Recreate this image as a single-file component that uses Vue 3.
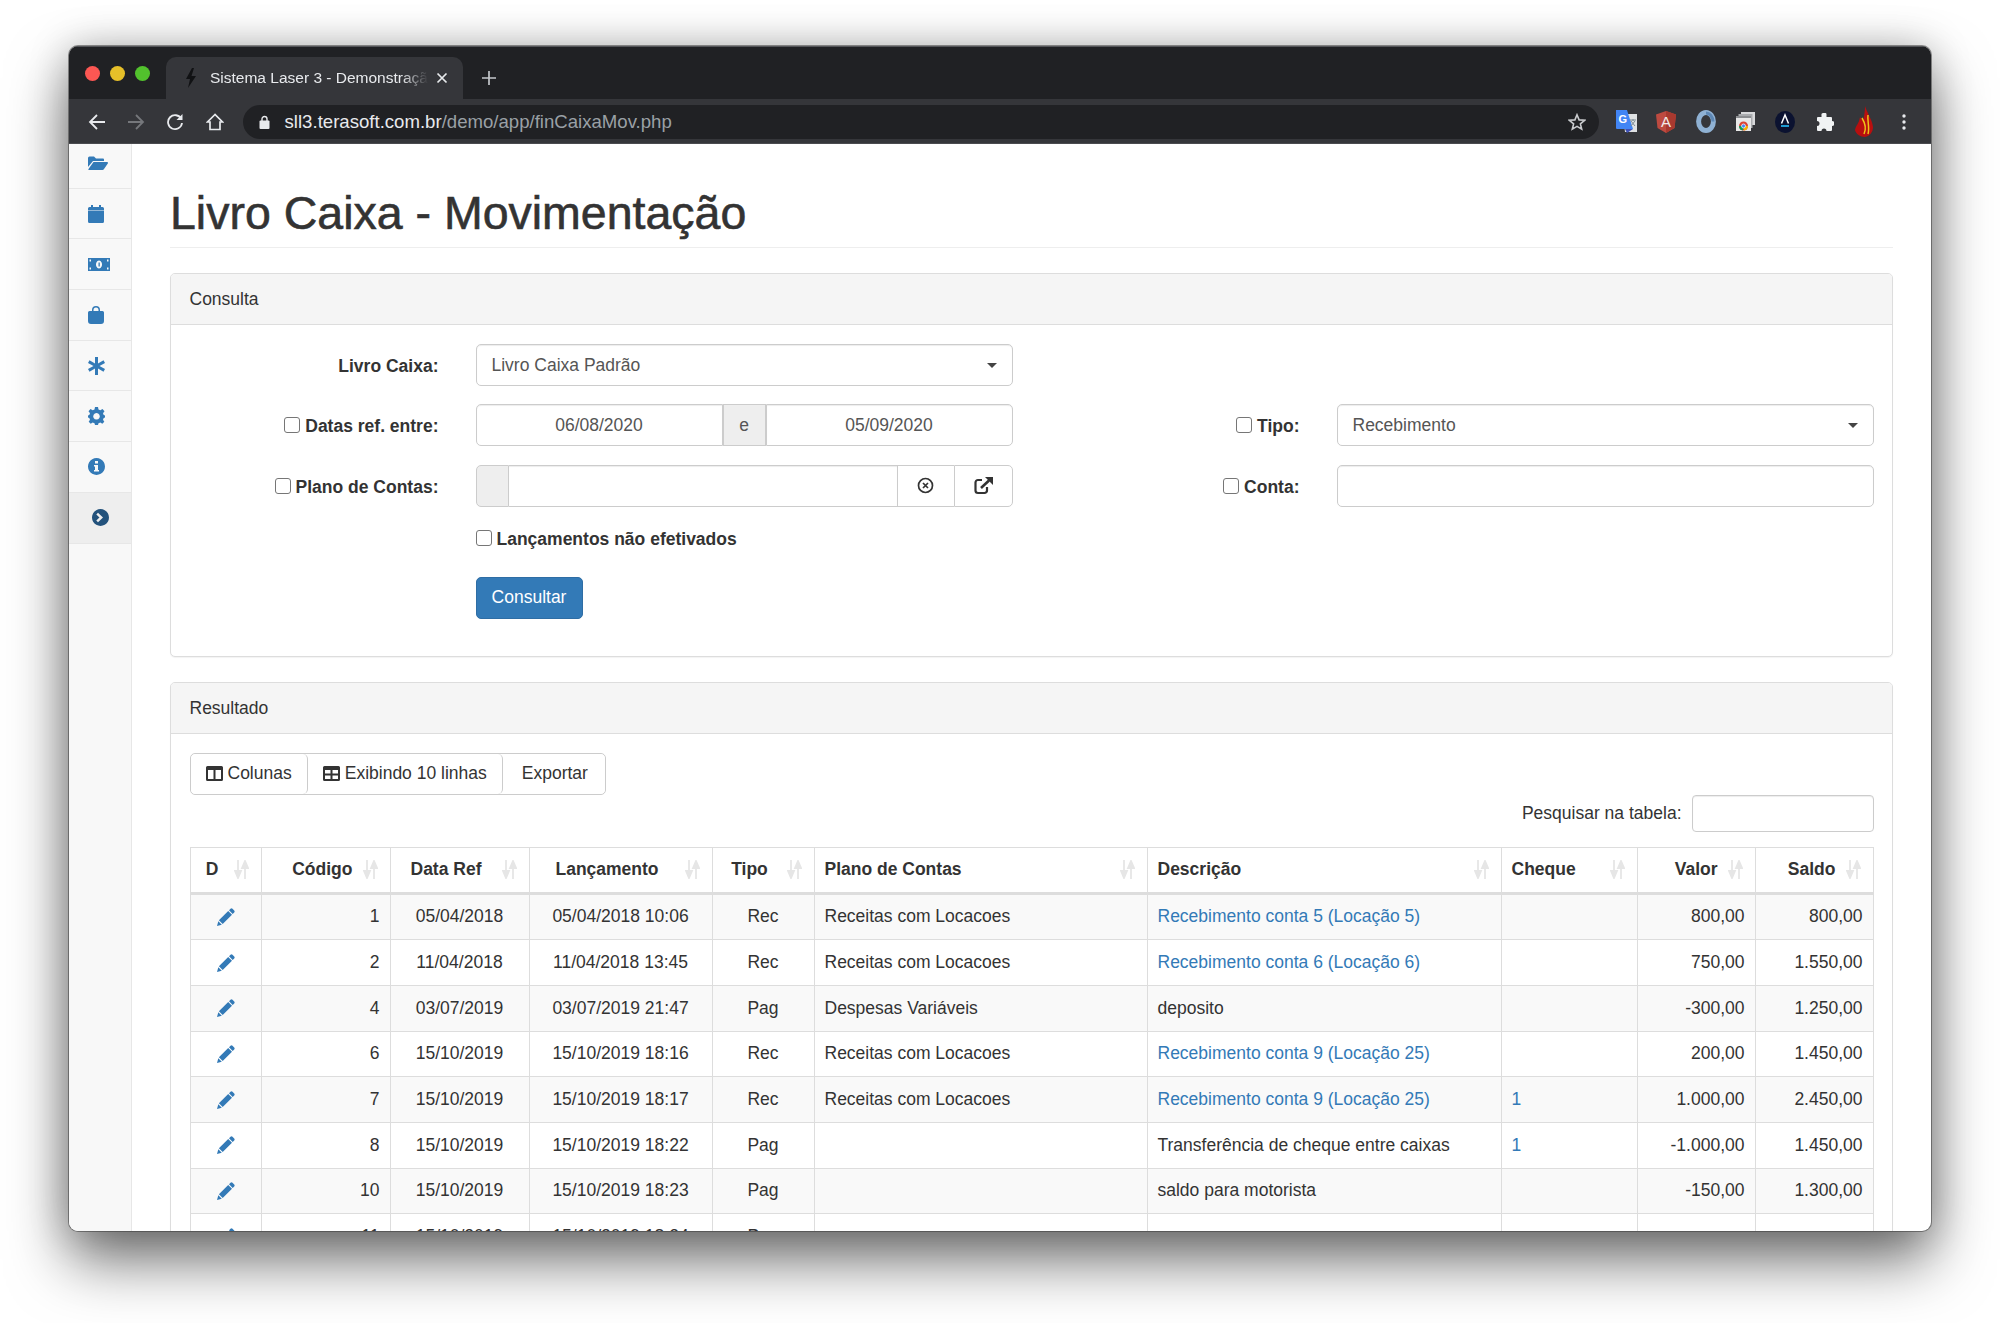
<template>
  <div class="desktop">
    <div class="window">
      <div class="titlebar">
        <div class="lights">
          <span class="light red"></span>
          <span class="light yellow"></span>
          <span class="light green"></span>
        </div>
        <div class="tab">
          <svg class="favicon" width="12" height="20" viewBox="0 0 12 20"><path d="M7 0 L1 11 h4 L3 20 L11 8 H6.5 L9 0z" fill="#111214" /></svg>
          <span class="tab-title">Sistema Laser 3 - Demonstração</span>
          <svg class="tab-close" width="12" height="12" viewBox="0 0 12 12"><path d="M1.5 1.5 L10.5 10.5 M10.5 1.5 L1.5 10.5" stroke="#e8eaed" stroke-width="1.7" /></svg>
        </div>
        <svg class="new-tab" width="16" height="16" viewBox="0 0 16 16"><path d="M8 1 V15 M1 8 H15" stroke="#c4c7cb" stroke-width="1.7" /></svg>
      </div>

      <div class="toolbar">
        <span class="tool"><svg width="18" height="18" viewBox="0 0 18 18"><path d="M17 9 H2 M9 2 L2 9 L9 16" fill="none" stroke="#e8eaed" stroke-width="1.8" /></svg></span>
        <span class="tool"><svg width="18" height="18" viewBox="0 0 18 18"><path d="M1 9 H16 M9 2 L16 9 L9 16" fill="none" stroke="#75777b" stroke-width="1.8" /></svg></span>
        <span class="tool"><svg width="18" height="18" viewBox="0 0 18 18"><path d="M15.3 6 A7 7 0 1 0 16 10" fill="none" stroke="#e8eaed" stroke-width="1.8" /><path d="M16.5 1 V7 H10.5z" fill="#e8eaed" /></svg></span>
        <span class="tool"><svg width="18" height="18" viewBox="0 0 18 18"><path d="M9 1.5 L1.5 9 H4 V16.5 H14 V9 H16.5z" fill="none" stroke="#e8eaed" stroke-width="1.7" /></svg></span>
        <div class="omnibox">
          <svg class="lock" width="11" height="14" viewBox="0 0 11 14"><path d="M3 6 V4 a2.5 2.5 0 0 1 5 0 V6" fill="none" stroke="#e8eaed" stroke-width="1.4" /><rect x="0.5" y="5.5" width="10" height="8.5" rx="1" fill="#e8eaed" /></svg>
          <span class="url"><span class="host">sll3.terasoft.com.br</span>/demo/app/finCaixaMov.php</span>
          <svg class="star" width="18" height="18" viewBox="0 0 18 18"><path d="M9 1.8 L11.1 6.9 L16.6 7.3 L12.4 10.9 L13.7 16.2 L9 13.4 L4.3 16.2 L5.6 10.9 L1.4 7.3 L6.9 6.9z" fill="none" stroke="#c8cacd" stroke-width="1.6" /></svg>
        </div>
        <div class="extensions">
          <span class="tool"><svg width="21" height="23" viewBox="0 0 21 23"><path d="M7 4 H21 V22 H9z" fill="#dfe1e3" /><path d="M0 0 H11 L17 19 H1 a1 1 0 0 1 -1 -1z" fill="#4285f4" /><path d="M9 19 H17 L11 23z" fill="#3f51b5" /><text x="2.5" y="13" font-size="11" font-weight="700" font-family="Liberation Sans, sans-serif" fill="#fff">G</text><path d="M14 10 H20 M17 9 V11 M15 16 L19 11 M15 11 L19 16" stroke="#7d8b94" stroke-width="1" fill="none" /></svg></span>
          <span class="tool"><svg width="20" height="22" viewBox="0 0 20 22"><path d="M10 0 L20 3.5 L18.5 17 L10 22 L1.5 17 L0 3.5z" fill="#bd4a40" /><path d="M10 0 L20 3.5 L18.5 17 L10 22z" fill="#a8392f" /><text x="10" y="16" text-anchor="middle" font-size="15" font-family="Liberation Sans, sans-serif" fill="#f3e9e7">A</text></svg></span>
          <span class="tool"><svg width="20" height="23" viewBox="0 0 20 23"><ellipse cx="10" cy="11.500" rx="7.400" ry="9" fill="none" stroke="#8fb1d3" stroke-width="5" /><path d="M10 3 a7 9 0 0 1 7 8.500" fill="none" stroke="#5d87b4" stroke-width="3" /></svg></span>
          <span class="tool"><svg width="19" height="19" viewBox="0 0 19 19"><rect x="5" y="0" width="14" height="13" fill="#d8d9db" /><rect x="2.500" y="2" width="14" height="14" fill="#a9abae" /><rect x="0" y="4" width="15" height="15" fill="#e8e8e8" /><rect x="0" y="4" width="15" height="2" fill="#8b8d90" /><circle cx="7.500" cy="14" r="4.500" fill="#db4437" /><path d="M7.500 14 L3 14 A4.500 4.500 0 0 0 7 18.500z" fill="#0f9d58" /><path d="M7.500 14 L12 14 A4.500 4.500 0 0 1 8 18.500z" fill="#f4b400" /><circle cx="7.500" cy="14" r="2" fill="#4285f4" stroke="#fff" stroke-width=".7" /></svg></span>
          <span class="tool"><svg width="20" height="22" viewBox="0 0 20 22"><ellipse cx="10" cy="11" rx="10" ry="11" fill="#0b1230" /><path d="M6.500 12.500 L10 4 L13.500 12.500" fill="none" stroke="#fff" stroke-width="1.500" /><rect x="6" y="14" width="8" height="2" fill="#1f9bd1" /></svg></span>
          <span class="tool"><svg width="18" height="18" viewBox="0 0 18 18"><path d="M7 0 h2.500 a1.500 1.500 0 0 1 1 1 V4 H15 a1 1 0 0 1 1 1 V8 a2.500 2.500 0 1 1 0 5 V17 a1 1 0 0 1 -1 1 H10.500 a2.500 2.500 0 1 0 -5 0 H2 a1 1 0 0 1 -1 -1 V13 a2.500 2.500 0 1 0 0 -5 V5 a1 1 0 0 1 1 -1 H5.500 V2.500 A2 2 0 0 1 7 0z" fill="#f1f3f4" /></svg></span>
          <span class="tool"><svg width="19" height="31" viewBox="0 0 19 31"><path d="M10 0 C12 7 17 13 18 21 C18 26 15 30 10 31 C5 31 1 28 0 24 C1 19 4 18 5 11 C7 14 8 14 8 16 C9 10 10 6 10 0z" fill="#b80f0f" /><path d="M7 12 C10 17 12 22 9 28 M13 9 C12 15 15 21 13 28" fill="none" stroke="#f0c419" stroke-width="1.500" /></svg></span>
          <span class="tool"><svg width="6" height="18" viewBox="0 0 6 18"><circle cx="3" cy="3" r="1.700" fill="#e8eaed" /><circle cx="3" cy="9" r="1.700" fill="#e8eaed" /><circle cx="3" cy="15" r="1.700" fill="#e8eaed" /></svg></span>
        </div>
      </div>

      <div class="page">
        <aside class="sidebar">
          <div v-for="(item, i) in menu" :key="i" class="menu-item" :class="{ active: item.active }">
            <svg :width="item.w" :height="item.h" :viewBox="`0 0 ${item.w} ${item.h}`">
              <path :d="item.d" fill-rule="evenodd" />
            </svg>
          </div>
        </aside>

        <main class="content">
          <h1>Livro Caixa - Movimentação</h1>

          <section class="panel">
            <div class="panel-heading">Consulta</div>
            <div class="panel-body form-body">
              <div class="form-grid">
                <label class="field-label">Livro Caixa:</label>
                <div class="select">Livro Caixa Padrão<span class="caret"></span></div>
                <span></span>
                <span></span>

                <label class="field-label"><input type="checkbox" />Datas ref. entre:</label>
                <div class="input-group">
                  <div class="control date">06/08/2020</div>
                  <div class="addon e-addon">e</div>
                  <div class="control date">05/09/2020</div>
                </div>
                <label class="field-label"><input type="checkbox" />Tipo:</label>
                <div class="select">Recebimento<span class="caret"></span></div>

                <label class="field-label"><input type="checkbox" />Plano de Contas:</label>
                <div class="input-group">
                  <div class="addon blank-addon"></div>
                  <div class="control grow"></div>
                  <div class="addon-btn">
                    <svg width="17" height="17" viewBox="0 0 17 17"><circle cx="8.500" cy="8.500" r="7" fill="none" stroke="#333" stroke-width="1.700" /><path d="M6 6 L11 11 M11 6 L6 11" stroke="#333" stroke-width="1.700" /></svg>
                  </div>
                  <div class="addon-btn last">
                    <svg width="19" height="18" viewBox="0 0 19 18"><path d="M8 3 H4 A2.500 2.500 0 0 0 1.500 5.500 V13.500 A2.500 2.500 0 0 0 4 16 H10.500 A2.500 2.500 0 0 0 13 13.500 V10" fill="none" stroke="#333" stroke-width="2.200" /><path d="M11 0 H19 V8z" fill="#333" /><path d="M7 11 L15 3.500" stroke="#333" stroke-width="2.600" /></svg>
                  </div>
                </div>
                <label class="field-label"><input type="checkbox" />Conta:</label>
                <div class="control"></div>

                <span></span>
                <label class="check-line"><input type="checkbox" />Lançamentos não efetivados</label>
                <span></span>
                <span></span>

                <span></span>
                <div class="submit-cell"><button class="btn-primary">Consultar</button></div>
              </div>
            </div>
          </section>

          <section class="panel">
            <div class="panel-heading">Resultado</div>
            <div class="panel-body">
              <div class="btn-group">
                <button>
                  <svg width="17" height="15" viewBox="0 0 17 15"><path fill-rule="evenodd" d="M1.500 0 H15.500 A1.500 1.500 0 0 1 17 1.500 V13.500 A1.500 1.500 0 0 1 15.500 15 H1.500 A1.500 1.500 0 0 1 0 13.500 V1.500 A1.500 1.500 0 0 1 1.500 0z M2 4 V13 H7.500 V4z M9.500 4 V13 H15 V4z" fill="#333" /></svg>
                  Colunas
                </button>
                <button>
                  <svg width="17" height="15" viewBox="0 0 17 15"><path fill-rule="evenodd" d="M1.500 0 H15.500 A1.500 1.500 0 0 1 17 1.500 V13.500 A1.500 1.500 0 0 1 15.500 15 H1.500 A1.500 1.500 0 0 1 0 13.500 V1.500 A1.500 1.500 0 0 1 1.500 0z M2 4 V7.500 H7.500 V4z M9.500 4 V7.500 H15 V4z M2 9.500 V13 H7.500 V9.500z M9.500 9.500 V13 H15 V9.500z" fill="#333" /></svg>
                  Exibindo 10 linhas
                </button>
                <button class="export">Exportar</button>
              </div>

              <div class="search">
                <span>Pesquisar na tabela:</span>
                <div class="search-input"></div>
              </div>

              <table>
                <colgroup>
                  <col v-for="col in columns" :key="col.label" :style="{ width: col.width + 'px' }" />
                </colgroup>
                <thead>
                  <tr>
                    <th v-for="col in columns" :key="col.label" :class="col.align">
                      {{ col.label }}
                      <svg class="sort" width="15" height="19" viewBox="0 0 15 19"><path d="M4 0 V14 M1 11 L4 18 L7 11z M11 19 V5 M8 8 L11 1 L14 8z" fill="#e6e6e6" stroke="#e6e6e6" stroke-width="1.800" /></svg>
                    </th>
                  </tr>
                </thead>
                <tbody>
                  <tr v-for="row in rows" :key="row.code">
                    <td class="center">
                      <svg class="pencil" width="18" height="18" viewBox="0 0 18 18"><path d="M13.500 .8 a1.500 1.500 0 0 1 2 0 l1.700 1.700 a1.500 1.500 0 0 1 0 2 L15.700 6 L12 2.300z M11.200 3 L15 6.800 L5.700 16 L1.900 12.300z M1.300 13.200 L4.800 16.700 L0 18z" fill="#337ab7" /></svg>
                    </td>
                    <td class="right">{{ row.code }}</td>
                    <td class="center">{{ row.ref }}</td>
                    <td class="center">{{ row.launch }}</td>
                    <td class="center">{{ row.type }}</td>
                    <td>{{ row.plan }}</td>
                    <td><a v-if="row.link" href="#">{{ row.desc }}</a><template v-else>{{ row.desc }}</template></td>
                    <td><a v-if="row.cheque" href="#">{{ row.cheque }}</a></td>
                    <td class="right">{{ row.value }}</td>
                    <td class="right">{{ row.balance }}</td>
                  </tr>
                </tbody>
              </table>
            </div>
          </section>
        </main>
      </div>
    </div>
  </div>
</template>

<script setup>
const menu = [
  { w: 20, h: 14, d: 'M0 2 a1.500 1.500 0 0 1 1.500 -1.500 H6 L8 2.500 H15 a1 1 0 0 1 1 1 V5 H5 L0 11z M5.500 6 H19 a1 1 0 0 1 .8 1.500 L16 13 a2 2 0 0 1 -1.500 1 H1 a.7 .7 0 0 1 -.5 -1.100z' },
  { w: 16, h: 18, d: 'M3 0 H5 V2 H11 V0 H13 V2 H14.500 A1.500 1.500 0 0 1 16 3.500 V16.500 A1.500 1.500 0 0 1 14.500 18 H1.500 A1.500 1.500 0 0 1 0 16.500 V3.500 A1.500 1.500 0 0 1 1.500 2 H3z M0 5 V5.600 H16 V5z' },
  { w: 22, h: 13, d: 'M0 0 H22 V13 H0z M11 2.500 a3 4 0 1 0 .01 0z M10.500 4.500 V8.500 H11.800 V4.500z M1.500 1.500 V3.500 H3 V1.500z M19 1.500 V3.500 H20.500 V1.500z M1.500 9.500 V11.500 H3 V9.500z M19 9.500 V11.500 H20.500 V9.500z' },
  { w: 16, h: 18, d: 'M4 5 V4 a4 4 0 0 1 8 0 V5 H14.500 A1.500 1.500 0 0 1 16 6.500 V15 a3 3 0 0 1 -3 3 H3 a3 3 0 0 1 -3 -3 V6.500 A1.500 1.500 0 0 1 1.500 5z M5.500 5 H10.500 V4 a2.500 2.500 0 0 0 -5 0z' },
  { w: 17, h: 18, d: 'M7 0 H10 V6.500 L15.500 3.300 L17 6 L11.500 9 L17 12 L15.500 14.700 L10 11.500 V18 H7 V11.500 L1.500 14.700 L0 12 L5.500 9 L0 6 L1.500 3.300 L7 6.500z' },
  { w: 17, h: 18, d: 'M7 0 H10 L10.500 2.500 L12.300 3.300 L14.500 2 L16.500 4.200 L15 6.300 L15.700 8 L17 8.400 V10.600 L15.700 11 L15 12.800 L16.300 14.800 L14.300 16.800 L12.300 15.500 L10.500 16.200 L10 18 H7 L6.500 16.200 L4.700 15.500 L2.700 16.800 L.7 14.800 L2 12.800 L1.300 11 L0 10.600 V8.400 L1.300 8 L2 6.300 L.5 4.200 L2.500 2 L4.700 3.300 L6.500 2.500z M8.500 6 a3.300 3.300 0 1 0 .01 0z' },
  { w: 17, h: 17, d: 'M8.500 0 a8.500 8.500 0 1 1 -.01 0z M7 3 V5.500 H10 V3z M6 7 V8.500 H7 V12 H6 V13.500 H11 V12 H10 V7z' },
  { w: 17, h: 17, active: true, d: 'M8.500 0 a8.500 8.500 0 1 1 -.01 0z M6 3.700 L4.300 5.400 L7.500 8.500 L4.300 11.600 L6 13.300 L11 8.500z' },
]

const columns = [
  { label: 'D', width: 72, align: 'center' },
  { label: 'Código', width: 129, align: 'right' },
  { label: 'Data Ref', width: 139, align: 'center' },
  { label: 'Lançamento', width: 183, align: 'center' },
  { label: 'Tipo', width: 102, align: 'center' },
  { label: 'Plano de Contas', width: 333, align: 'left' },
  { label: 'Descrição', width: 354, align: 'left' },
  { label: 'Cheque', width: 136, align: 'left' },
  { label: 'Valor', width: 118, align: 'right' },
  { label: 'Saldo', width: 118, align: 'right' },
]

const rec = 'Receitas com Locacoes'
const rows = [
  { code: 1, ref: '05/04/2018', launch: '05/04/2018 10:06', type: 'Rec', plan: rec, desc: 'Recebimento conta 5 (Locação 5)', link: true, value: '800,00', balance: '800,00' },
  { code: 2, ref: '11/04/2018', launch: '11/04/2018 13:45', type: 'Rec', plan: rec, desc: 'Recebimento conta 6 (Locação 6)', link: true, value: '750,00', balance: '1.550,00' },
  { code: 4, ref: '03/07/2019', launch: '03/07/2019 21:47', type: 'Pag', plan: 'Despesas Variáveis', desc: 'deposito', value: '-300,00', balance: '1.250,00' },
  { code: 6, ref: '15/10/2019', launch: '15/10/2019 18:16', type: 'Rec', plan: rec, desc: 'Recebimento conta 9 (Locação 25)', link: true, value: '200,00', balance: '1.450,00' },
  { code: 7, ref: '15/10/2019', launch: '15/10/2019 18:17', type: 'Rec', plan: rec, desc: 'Recebimento conta 9 (Locação 25)', link: true, cheque: '1', value: '1.000,00', balance: '2.450,00' },
  { code: 8, ref: '15/10/2019', launch: '15/10/2019 18:22', type: 'Pag', plan: '', desc: 'Transferência de cheque entre caixas', cheque: '1', value: '-1.000,00', balance: '1.450,00' },
  { code: 10, ref: '15/10/2019', launch: '15/10/2019 18:23', type: 'Pag', plan: '', desc: 'saldo para motorista', value: '-150,00', balance: '1.300,00' },
  { code: 11, ref: '15/10/2019', launch: '15/10/2019 18:24', type: 'Pag', plan: '', desc: '', value: '', balance: '' },
]
</script>

<style>
html, body { background: #fff; }
</style>

<style scoped>
.desktop {
  height: 1323px;
  box-sizing: border-box;
  padding: 46px 69px 92px;
  overflow: hidden;
  background: #fff;
  font-family: "Liberation Sans", Arial, sans-serif;
  font-size: 17.5px;
  color: #333;
}

.window {
  height: 100%;
  border-radius: 9px;
  overflow: hidden;
  background: #fff;
  display: flex;
  flex-direction: column;
  box-shadow: 0 0 0 1px rgba(60, 60, 60, .55), 0 0 40px rgba(0, 0, 0, .22), 0 30px 60px rgba(0, 0, 0, .55);
}

.titlebar {
  height: 53px;
  flex: none;
  background: #202124;
  display: flex;
  align-items: flex-end;
  box-shadow: inset 0 1px 0 #55565a;
}

.lights {
  display: flex;
  gap: 10px;
  width: 97px;
  padding: 0 0 18px 16px;
  box-sizing: border-box;
}

.light {
  width: 15px;
  height: 15px;
  border-radius: 50%;
}

.red { background: #fc5753; }
.yellow { background: #e6bf29; }
.green { background: #52c22d; }

.tab {
  width: 297px;
  height: 42px;
  background: #35363a;
  border-radius: 10px 10px 0 0;
  display: flex;
  align-items: center;
  box-sizing: border-box;
  padding: 0 15px 0 19px;
}

.favicon { flex: none; margin-right: 13px; }

.tab-title {
  flex: 1;
  color: #e8eaed;
  font-size: 15.500px;
  white-space: nowrap;
  overflow: hidden;
  -webkit-mask-image: linear-gradient(90deg, #000 88%, transparent);
  mask-image: linear-gradient(90deg, #000 88%, transparent);
}

.tab-close { flex: none; margin-left: 8px; }

.new-tab { margin: 0 0 13px 18px; }

.toolbar {
  height: 45px;
  flex: none;
  background: #35363a;
  display: flex;
  align-items: center;
  padding-left: 8px;
  box-shadow: inset 0 -1px 0 #4a4b4f;
}

.tool {
  width: 39.400px;
  display: flex;
  justify-content: center;
  align-items: center;
}

.omnibox {
  width: 1356px;
  height: 34px;
  margin-left: 8px;
  background: #202124;
  border-radius: 17px;
  display: flex;
  align-items: center;
  padding: 0 13px 0 16px;
  box-sizing: border-box;
  color: #9aa0a6;
  font-size: 18.600px;
}

.url { flex: 1; margin-left: 15px; }
.host { color: #e8eaed; }
.extensions { display: flex; margin-left: 8px; }
.extensions .tool { width: 39.700px; }

.page {
  flex: 1;
  display: flex;
  min-height: 0;
  overflow: hidden;
}

.sidebar {
  width: 63px;
  flex: none;
  box-sizing: border-box;
  background: #f8f8f8;
  border-right: 1px solid #e7e7e7;
  overflow: hidden;
}

.menu-item {
  height: 50.700px;
  box-sizing: border-box;
  border-bottom: 1px solid #e7e7e7;
  display: flex;
  align-items: center;
  padding-left: 19px;
  fill: #337ab7;
}

.menu-item:first-child { margin-top: -6px; }

.menu-item.active {
  background: #eee;
  fill: #23527c;
  padding-left: 23px;
}

.content {
  flex: 1;
  min-width: 0;
  padding: 0 38px;
  overflow: hidden;
}

h1 {
  margin: 45px 0 25px;
  padding-bottom: 8px;
  border-bottom: 1px solid #eee;
  font-size: 46.500px;
  font-weight: 400;
  line-height: 49.500px;
  -webkit-text-stroke: .6px #333;
}

.panel {
  border: 1px solid #ddd;
  border-radius: 5px;
  margin-bottom: 25px;
  background: #fff;
  box-shadow: 0 1px 1px rgba(0, 0, 0, .05);
}

.panel-heading {
  height: 51px;
  box-sizing: border-box;
  padding: 0 18.500px;
  line-height: 51px;
  background: #f5f5f5;
  border-bottom: 1px solid #ddd;
  border-radius: 4px 4px 0 0;
}

.panel-body { padding: 19px 18.500px; }
.form-body { padding-bottom: 37px; }

.form-grid {
  display: grid;
  grid-template-columns: 249px 537px 250px 537px;
  grid-template-rows: 42px 42px 42px 29px 46px;
  column-gap: 37px;
  row-gap: 18.500px;
  align-items: center;
}

.field-label {
  text-align: right;
  font-weight: 700;
  display: flex;
  justify-content: flex-end;
  align-items: center;
  padding: 3px 0 0 1px;
}

input[type="checkbox"] {
  appearance: none;
  width: 16px;
  height: 16px;
  margin: 0 5px 3px 0;
  background: #fff;
  border: 1px solid #767676;
  border-radius: 3px;
}

.select, .control {
  height: 42px;
  box-sizing: border-box;
  border: 1px solid #ccc;
  border-radius: 5px;
  padding: 0 15px;
  line-height: 41px;
  color: #555;
  background: #fff;
  box-shadow: inset 0 1px 1px rgba(0, 0, 0, .075);
  position: relative;
}

.caret {
  position: absolute;
  right: 15px;
  top: 18px;
  border: 5px solid transparent;
  border-top-color: #444;
  border-bottom: 0;
}

.input-group {
  display: flex;
  height: 42px;
}

.input-group .control { border-radius: 0; }
.input-group .control:first-child { border-radius: 5px 0 0 5px; }
.input-group .control:last-child { border-radius: 0 5px 5px 0; }

.date {
  flex: 1;
  text-align: center;
}

.grow { flex: 1; border-left: 0; border-right: 0; }

.addon {
  height: 42px;
  box-sizing: border-box;
  background: #eee;
  border: 1px solid #ccc;
  color: #555;
  line-height: 41px;
  text-align: center;
}

.e-addon {
  width: 43px;
  border-left-width: 0;
  border-right-width: 0;
  box-shadow: inset 1px 0 0 #ccc, inset -1px 0 0 #ccc;
}

.blank-addon {
  width: 33px;
  border-radius: 5px 0 0 5px;
}

.addon-btn {
  width: 57px;
  height: 42px;
  box-sizing: border-box;
  border: 1px solid #ccc;
  border-right: 0;
  display: flex;
  align-items: center;
  justify-content: center;
  background: #fff;
}

.addon-btn.last {
  width: 59px;
  border-right: 1px solid #ccc;
  border-radius: 0 5px 5px 0;
}

.check-line {
  font-weight: 700;
  display: flex;
  align-items: center;
}

.submit-cell { align-self: start; padding-top: 4px; }

.btn-primary {
  width: 107px;
  height: 42px;
  background: #337ab7;
  border: 1px solid #2e6da4;
  border-radius: 5px;
  color: #fff;
  font: inherit;
  display: block;
}

.btn-group {
  display: inline-flex;
  height: 42px;
  border: 1px solid #ccc;
  border-radius: 5px;
  box-sizing: border-box;
  vertical-align: top;
}

.btn-group button {
  background: #fff;
  border: 0;
  border-right: 1px solid #ccc;
  padding: 0 15px;
  font: inherit;
  color: #333;
  display: flex;
  align-items: center;
  gap: 5px;
  border-radius: 5px;
}

.btn-group button.export {
  border-right: 0;
  padding: 0 17px 0 19px;
}

.search {
  display: flex;
  justify-content: flex-end;
  align-items: center;
  gap: 10px;
  height: 37px;
  margin-bottom: 15px;
}

.search-input {
  width: 182px;
  height: 37px;
  box-sizing: border-box;
  border: 1px solid #ccc;
  border-radius: 4px;
  box-shadow: inset 0 1px 1px rgba(0, 0, 0, .075);
}

table {
  border-collapse: separate;
  border-spacing: 0;
  table-layout: fixed;
  width: 1684px;
}

th, td {
  border-right: 1px solid #ddd;
  border-bottom: 1px solid #ddd;
  padding: 0 10px;
  box-sizing: border-box;
  white-space: nowrap;
}

th:first-child, td:first-child { border-left: 1px solid #ddd; }

th {
  height: 48px;
  position: relative;
  padding-right: 37px;
  font-weight: 700;
  border-top: 1px solid #ddd;
  border-bottom-width: 3px;
  text-align: left;
}

td { height: 45.700px; }

tbody tr:nth-child(odd) td { background: #f9f9f9; }

.center { text-align: center; }
.right { text-align: right; }
th.center { text-align: center; }
th.right { text-align: right; }

.sort {
  position: absolute;
  right: 12px;
  top: 12px;
}

.pencil { display: block; margin: 0 auto; }

a {
  color: #337ab7;
  text-decoration: none;
}
</style>
